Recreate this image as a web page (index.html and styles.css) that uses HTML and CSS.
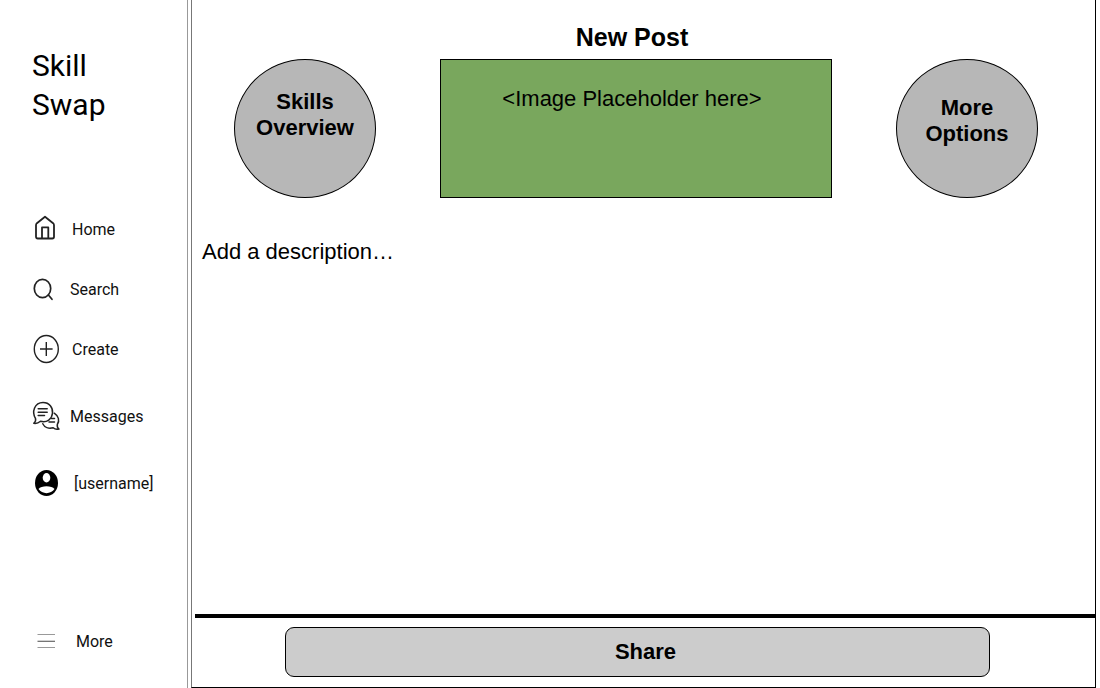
FILE: index.html
```html
<!DOCTYPE html>
<html lang="en">
<head>
<meta charset="utf-8">
<meta name="viewport" content="width=device-width, initial-scale=1">
<title>Skill Swap – New Post</title>
<link rel="stylesheet" href="styles.css">
</head>
<body>
<div class="app">
  <aside class="sidebar">
    <div class="brand">Skill<br>Swap</div>
    <nav class="nav">
      <a class="nav-item" href="#home">
        <svg class="icon" width="28" height="30" viewBox="0 0 28 30" fill="none" stroke="#222" stroke-width="1.8" stroke-linejoin="round"><path d="M4 11.200Q4 10 4.900 9.200L13 2.800L21.100 9.200Q22 10 22 11.200V22.800Q22 24.500 20.300 24.500H5.700Q4 24.500 4 22.800ZM10 24.300V13.400H16.300V24.300"/></svg>
        <span>Home</span>
      </a>
      <a class="nav-item" href="#search">
        <svg class="icon" width="26" height="30" viewBox="0 0 26 30" fill="none" stroke="#222" stroke-width="1.7" stroke-linecap="round"><ellipse cx="10.500" cy="14.500" rx="8.200" ry="9.200"/><path d="M16.400 21L20 25.300"/></svg>
        <span>Search</span>
      </a>
      <a class="nav-item" href="#create">
        <svg class="icon" width="28" height="30" viewBox="0 0 28 30" fill="none" stroke="#222" stroke-width="1.400"><ellipse cx="14.300" cy="15" rx="12" ry="13.500"/><path d="M8 15H20.600M14.300 8V22"/></svg>
        <span>Create</span>
      </a>
      <a class="nav-item nav-item-spaced" href="#messages">
        <svg class="icon" width="26" height="30" viewBox="0 0 26 30" fill="none" stroke="#222" stroke-width="1.500" stroke-linejoin="round" stroke-linecap="round"><path d="M3.500 17.500C-.5 11 2.500 1.500 11 1.500C17.500 1.500 21 6.500 20.500 12C20 18 15 22 8.500 20.300C6.500 22 4.500 22.700 1.800 22.300C3.500 20.800 4 19.300 3.500 17.500ZM6.200 7.800H15.200M6.200 11.200H15.200M6.200 14.600H12.500"/><path d="M22.200 12.200C26.500 15 28 19.500 25.300 23.500C25 25.500 25.600 27 27 28C24.500 28.600 22.500 28 21.200 26.800C16.800 28 12.500 26.500 10.800 22.800M19.500 17.600H22.500M17 21H22.500"/></svg>
        <span>Messages</span>
      </a>
      <a class="nav-item nav-item-spaced" href="#profile">
        <svg class="icon" width="30" height="30" viewBox="0 0 30 30"><ellipse cx="14.500" cy="15" rx="11.500" ry="13" fill="#000"/><ellipse cx="14.500" cy="9.700" rx="3.800" ry="4.700" fill="#fff"/><path d="M6.500 21C9 17.200 20 17.200 22.500 21C19 26.500 10 26.500 6.500 21Z" fill="#fff"/></svg>
        <span>[username]</span>
      </a>
    </nav>
    <a class="nav-item nav-more" href="#more">
      <svg class="icon" width="32" height="30" viewBox="0 0 32 30" fill="none" stroke-width="1.200"><path stroke="#999" d="M5.500 8.500H23M5.500 21.500H23"/><path stroke="#666" d="M5.500 15.300H23"/></svg>
      <span>More</span>
    </a>
  </aside>
  <main class="composer">
    <header class="toolbar">
      <button class="round" type="button">Skills<br>Overview</button>
      <div class="media">
        <h1 class="title">New Post</h1>
        <div class="placeholder">&lt;Image Placeholder here&gt;</div>
      </div>
      <button class="round round-low" type="button">More<br>Options</button>
    </header>
    <textarea class="description" aria-label="Description" placeholder="Add a description…"></textarea>
    <footer class="actions">
      <button class="share" type="button">Share</button>
    </footer>
  </main>
</div>
</body>
</html>
```
FILE: styles.css
```css
* {
  box-sizing: border-box;
}

body {
  margin: 0;
  background: #fff;
  color: #000;
  font-family: "Liberation Sans", Arial, sans-serif;
  font-size: 22px;
}

.app {
  display: flex;
  gap: 3px;
  min-height: 100vh;
  padding-right: 4px;
}

.sidebar {
  display: flex;
  flex: none;
  flex-direction: column;
  width: 188px;
  padding: 46px 0 17px 32px;
  border-right: 1px solid #999;
  font-family: Roboto, Inter, sans-serif;
}

.brand {
  font-size: 30px;
  line-height: 39px;
}

.nav {
  margin-top: 75px;
}

.nav-item {
  display: flex;
  align-items: center;
  gap: 12px;
  height: 60px;
  color: #111;
  font-size: 16px;
  text-decoration: none;
}

.nav-item-spaced {
  margin-top: 7px;
}

.nav-more {
  margin-top: auto;
}

.icon {
  flex: none;
  overflow: visible;
}

.composer {
  display: flex;
  flex: 1;
  flex-direction: column;
  min-width: 0;
  border: 1px solid #000;
  border-top: 0;
  border-left-color: #777;
}

.toolbar {
  display: flex;
  align-items: flex-end;
  gap: 64px;
  padding: 16px 57px 0 42px;
}

.round {
  flex: none;
  width: 142px;
  height: 139px;
  padding: 0 0 28px;
  border: 1px solid #000;
  border-radius: 50%;
  background: #b7b7b7;
  color: #000;
  font: bold 22px/26px "Liberation Sans", Arial, sans-serif;
}

.round-low {
  padding-bottom: 16px;
}

.media {
  flex: 1;
  min-width: 0;
  text-align: center;
}

.title {
  margin: 0;
  padding-right: 8px;
  font-size: 25px;
  line-height: 43px;
}

.placeholder {
  height: 139px;
  padding: 26px 8px 0 0;
  border: 1px solid #000;
  background: #79a75d;
  line-height: 26px;
}

.description {
  flex: 1;
  width: 100%;
  margin-top: 33px;
  padding: 8px 10px;
  border: 0;
  background: transparent;
  color: #000;
  font: 22px/26px "Liberation Sans", Arial, sans-serif;
  resize: none;
}

.description::placeholder {
  color: #000;
  opacity: 1;
}

.actions {
  margin-left: 3px;
  padding: 9px 105px 10px 90px;
  border-top: 4px solid #000;
}

.share {
  display: block;
  width: 100%;
  height: 50px;
  border: 1px solid #000;
  border-radius: 9px;
  background: #ccc;
  padding: 0 0 0 16px;
  color: #000;
  font: bold 22px/26px "Liberation Sans", Arial, sans-serif;
}
```
